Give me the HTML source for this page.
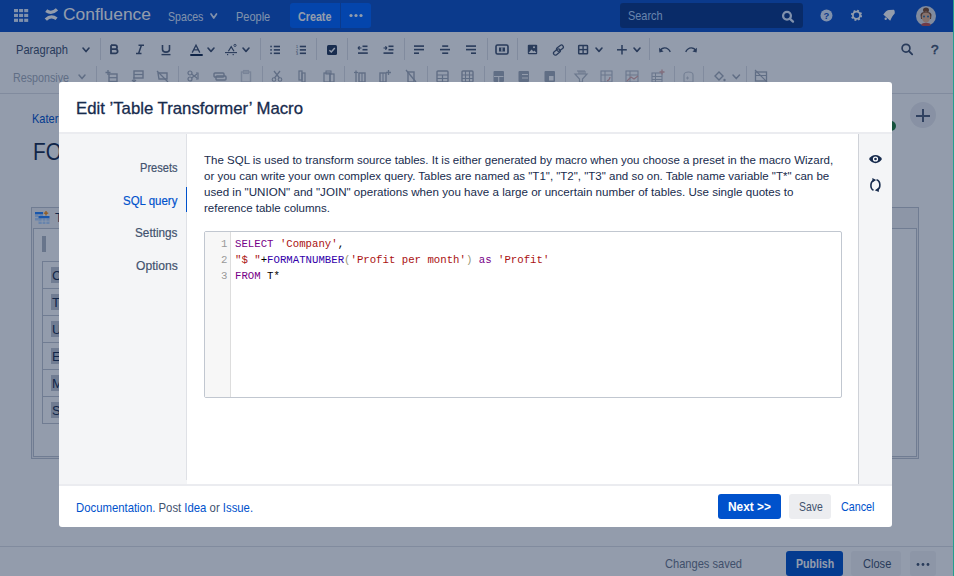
<!DOCTYPE html><html><head><meta charset="utf-8"><style>
*{box-sizing:border-box;margin:0;padding:0}
html,body{width:954px;height:576px;overflow:hidden;background:#fff;font-family:"Liberation Sans",sans-serif;color:#172b4d}
.a{position:absolute;overflow:visible}
.t{position:absolute;white-space:pre}
</style></head><body>
<div class="a" style="left:0;top:0;width:954px;height:32px;background:#0d50c6"></div>
<svg class="a" style="left:14px;top:9px;" width="15" height="13" viewBox="0 0 15 13"><rect x="0.00" y="0.00" width="4" height="3.2" fill="#deebff"/><rect x="0.00" y="4.85" width="4" height="3.2" fill="#deebff"/><rect x="0.00" y="9.70" width="4" height="3.2" fill="#deebff"/><rect x="5.10" y="0.00" width="4" height="3.2" fill="#deebff"/><rect x="5.10" y="4.85" width="4" height="3.2" fill="#deebff"/><rect x="5.10" y="9.70" width="4" height="3.2" fill="#deebff"/><rect x="10.20" y="0.00" width="4" height="3.2" fill="#deebff"/><rect x="10.20" y="4.85" width="4" height="3.2" fill="#deebff"/><rect x="10.20" y="9.70" width="4" height="3.2" fill="#deebff"/></svg>
<svg class="a" style="left:45px;top:8px;" width="14" height="13" viewBox="0 0 14 13"><path d="M1.2,2.6 Q6.5,6.6 12,1.4" fill="none" stroke="#fff" stroke-width="3.3"/><path d="M0.8,11.6 Q6,6.6 11.6,10.8" fill="none" stroke="#fff" stroke-width="3.3"/></svg>
<svg class="a" style="left:209px;top:11.5px" width="9.5" height="8.0"><polyline points="2,2 4.75,6.0 7.5,2" fill="none" stroke="#deebff" stroke-width="1.7" stroke-linecap="round" stroke-linejoin="round"/></svg>
<div class="a" style="left:290px;top:3px;width:50px;height:25px;background:#0065ff;border-radius:3px 0 0 3px"></div>
<div class="a" style="left:341px;top:3px;width:30px;height:25px;background:#0065ff;border-radius:0 3px 3px 0"></div>
<svg class="a" style="left:349px;top:13px;" width="14" height="5" viewBox="0 0 14 5"><circle cx="2" cy="2.5" r="1.6" fill="#fff"/><circle cx="7" cy="2.5" r="1.6" fill="#fff"/><circle cx="12" cy="2.5" r="1.6" fill="#fff"/></svg>
<div class="a" style="left:620px;top:3px;width:183px;height:25px;background:rgba(9,30,66,0.48);border-radius:3px"></div>
<svg class="a" style="left:781px;top:10px;" width="15" height="14" viewBox="0 0 15 14"><circle cx="6" cy="5.8" r="3.9" fill="none" stroke="#deebff" stroke-width="2.3"/><line x1="8.8" y1="8.6" x2="12" y2="11.6" stroke="#deebff" stroke-width="2.3" stroke-linecap="round"/></svg>
<svg class="a" style="left:820px;top:9px;" width="13" height="13" viewBox="0 0 13 13"><circle cx="6.5" cy="6.5" r="6" fill="#deebff"/><text x="6.5" y="10.3" font-family="Liberation Sans" font-weight="700" font-size="9.5" text-anchor="middle" fill="#0d50c6">?</text></svg>
<svg class="a" style="left:850px;top:9px;" width="13" height="13" viewBox="0 0 13 13"><circle cx="6.5" cy="6.3" r="4.7" fill="none" stroke="#fff" stroke-width="1.8" stroke-dasharray="1.85 1.85"/><circle cx="6.5" cy="6.3" r="3.6" fill="none" stroke="#fff" stroke-width="1.8"/></svg>
<svg class="a" style="left:883px;top:9px;" width="13" height="13" viewBox="0 0 13 13"><path d="M0.3,5.4 C2,3.5 3.5,1.5 5.8,1.1 L10.9,0.8 C11.8,1.5 11.9,3.5 11.7,4.6 L10,6.5 C8.8,8 8,10 7.2,11.7 Z" fill="#fff"/><circle cx="2.7" cy="9.8" r="1.2" fill="#fff"/></svg>
<svg class="a" style="left:916px;top:6px;" width="20" height="20" viewBox="0 0 20 20"><circle cx="10" cy="10" r="10" fill="#dfe1e6"/><ellipse cx="10" cy="4" rx="3" ry="2.6" fill="#7a4a2a"/><path d="M4.5,9 C4.5,4.5 15.5,4.5 15.5,9 L15,13 L5,13 Z" fill="#7a4a2a"/><ellipse cx="10" cy="11" rx="4.3" ry="5.5" fill="#e8b48e"/><path d="M5.5,9 C6,6 14,6 14.5,9 L14.5,8 C14,5.5 6,5.5 5.5,8Z" fill="#7a4a2a"/><circle cx="8" cy="10.5" r="1" fill="#2a6fa8"/><circle cx="12" cy="10.5" r="1" fill="#2a6fa8"/><path d="M5,19 C6,16 14,16 15,19 L13,20 L7,20Z" fill="#c0504d"/></svg>
<div class="a" style="left:0;top:93px;width:954px;height:1px;background:#dfe1e6"></div>
<svg class="a" style="left:80.5px;top:45.8px" width="10.0" height="7.600000000000001"><polyline points="2,2 5.0,5.600000000000001 8.0,2" fill="none" stroke="#42526e" stroke-width="1.6" stroke-linecap="round" stroke-linejoin="round"/></svg>
<div class="a" style="left:100px;top:38px;width:1px;height:22px;background:#dfe1e6"></div>
<svg class="a" style="left:109px;top:44px;" width="11" height="11" viewBox="0 0 11 11"><path d="M2,1.2 H6 C8.6,1.2 8.8,5.2 6.2,5.2 H2 M6.2,5.2 C9.4,5.2 9.4,9.4 6.4,9.4 H2 V1.2" fill="none" stroke="#42526e" stroke-width="1.8" stroke-linejoin="round"/></svg>
<svg class="a" style="left:135px;top:44px;" width="10" height="11" viewBox="0 0 10 11"><path d="M3.5,1.2 H9 M1,9.6 H6.5 M6.4,1.2 L3.6,9.6" fill="none" stroke="#42526e" stroke-width="1.5"/></svg>
<svg class="a" style="left:160px;top:44px;" width="12" height="12" viewBox="0 0 12 12"><path d="M2.5,1 V5.5 C2.5,9 9.5,9 9.5,5.5 V1" fill="none" stroke="#42526e" stroke-width="1.6"/><line x1="1.5" y1="10.6" x2="10.5" y2="10.6" stroke="#42526e" stroke-width="1.4"/></svg>
<svg class="a" style="left:189px;top:44px;" width="15" height="13" viewBox="0 0 15 13"><path d="M3.2,8.6 L7,1.2 L10.8,8.6 M4.8,5.8 H9.2" fill="none" stroke="#42526e" stroke-width="1.3"/><rect x="1.3" y="10" width="12.4" height="2" fill="#172b4d"/></svg>
<svg class="a" style="left:206px;top:45.6px" width="10" height="7.399999999999999"><polyline points="2,2 5.0,5.399999999999999 8,2" fill="none" stroke="#42526e" stroke-width="1.6" stroke-linecap="round" stroke-linejoin="round"/></svg>
<svg class="a" style="left:224px;top:43px;" width="14" height="14" viewBox="0 0 14 14"><path d="M4.4,8.2 L7.2,3.6 L10,8.2" fill="none" stroke="#42526e" stroke-width="1.2"/><line x1="1" y1="9.6" x2="13" y2="9.6" stroke="#42526e" stroke-width="1.1"/><rect x="3" y="11" width="1.2" height="1.2" fill="#42526e"/><rect x="8.6" y="11" width="1.2" height="1.2" fill="#42526e"/><circle cx="11" cy="2.4" r="1.1" fill="none" stroke="#42526e" stroke-width="0.9"/></svg>
<svg class="a" style="left:241px;top:45.6px" width="10" height="7.399999999999999"><polyline points="2,2 5.0,5.399999999999999 8,2" fill="none" stroke="#42526e" stroke-width="1.6" stroke-linecap="round" stroke-linejoin="round"/></svg>
<div class="a" style="left:260px;top:38px;width:1px;height:22px;background:#dfe1e6"></div>
<svg class="a" style="left:270px;top:45px;" width="11" height="10" viewBox="0 0 11 10"><rect x="0.3" y="0.7" width="1.5" height="1.6" fill="#42526e"/><rect x="3.8" y="0.7" width="6.2" height="1.6" fill="#42526e"/><rect x="0.3" y="4.1" width="1.5" height="1.6" fill="#42526e"/><rect x="3.8" y="4.1" width="6.2" height="1.6" fill="#42526e"/><rect x="0.3" y="7.5" width="1.5" height="1.6" fill="#42526e"/><rect x="3.8" y="7.5" width="6.2" height="1.6" fill="#42526e"/></svg>
<svg class="a" style="left:296px;top:45px;" width="11" height="10" viewBox="0 0 11 10"><rect x="3.8" y="0.7" width="6.2" height="1.6" fill="#42526e"/><rect x="3.8" y="4.1" width="6.2" height="1.6" fill="#42526e"/><rect x="3.8" y="7.5" width="6.2" height="1.6" fill="#42526e"/><text x="0" y="3" font-size="3.6" font-family="Liberation Sans" fill="#42526e">1</text><text x="0" y="6.6" font-size="3.6" font-family="Liberation Sans" fill="#42526e">2</text><text x="0" y="10" font-size="3.6" font-family="Liberation Sans" fill="#42526e">3</text></svg>
<div class="a" style="left:316px;top:38px;width:1px;height:22px;background:#dfe1e6"></div>
<svg class="a" style="left:327px;top:44.5px;" width="10" height="10" viewBox="0 0 10 10"><rect x="0" y="0" width="10" height="10" rx="1.5" fill="#253858"/><polyline points="2.4,5.2 4.3,7 7.8,3" fill="none" stroke="#fff" stroke-width="1.5"/></svg>
<div class="a" style="left:347px;top:38px;width:1px;height:22px;background:#dfe1e6"></div>
<svg class="a" style="left:357px;top:45px;" width="11" height="10" viewBox="0 0 11 10"><rect x="5.5" y="0.5" width="5" height="1.6" fill="#42526e"/><rect x="5.5" y="3.9" width="5" height="1.6" fill="#42526e"/><rect x="1" y="7.3" width="9.8" height="1.6" fill="#42526e"/><path d="M1,3 L4.5,3 M1,3 L2.6,1.4 M1,3 L2.6,4.6" stroke="#42526e" stroke-width="1.2" fill="none"/></svg>
<svg class="a" style="left:383px;top:45px;" width="11" height="10" viewBox="0 0 11 10"><rect x="5.5" y="0.5" width="5" height="1.6" fill="#42526e"/><rect x="5.5" y="3.9" width="5" height="1.6" fill="#42526e"/><rect x="0.5" y="7.3" width="9.8" height="1.6" fill="#42526e"/><path d="M0.5,3 L4,3 M4,3 L2.4,1.4 M4,3 L2.4,4.6" stroke="#42526e" stroke-width="1.2" fill="none"/></svg>
<div class="a" style="left:404px;top:38px;width:1px;height:22px;background:#dfe1e6"></div>
<svg class="a" style="left:414px;top:45px;" width="11" height="10" viewBox="0 0 11 10"><rect x="0" y="0.3" width="10" height="1.6" fill="#42526e"/><rect x="0" y="3.8" width="10" height="1.6" fill="#42526e"/><rect x="0" y="7.4" width="5" height="1.6" fill="#42526e"/></svg>
<svg class="a" style="left:440px;top:45px;" width="11" height="10" viewBox="0 0 11 10"><rect x="2.2" y="0.3" width="6" height="1.6" fill="#42526e"/><rect x="0" y="3.8" width="10" height="1.6" fill="#42526e"/><rect x="2.2" y="7.4" width="6" height="1.6" fill="#42526e"/></svg>
<svg class="a" style="left:466px;top:45px;" width="11" height="10" viewBox="0 0 11 10"><rect x="0" y="0.3" width="10" height="1.6" fill="#42526e"/><rect x="0" y="3.8" width="10" height="1.6" fill="#42526e"/><rect x="5" y="7.4" width="5" height="1.6" fill="#42526e"/></svg>
<div class="a" style="left:487px;top:38px;width:1px;height:22px;background:#dfe1e6"></div>
<svg class="a" style="left:495px;top:44px;" width="14" height="11" viewBox="0 0 14 11"><rect x="1" y="1" width="12" height="9" rx="1.5" fill="none" stroke="#42526e" stroke-width="1.6"/><rect x="4" y="3.5" width="6" height="4" fill="#42526e"/><rect x="6.3" y="3.5" width="1.2" height="4" fill="#fff"/></svg>
<div class="a" style="left:517px;top:38px;width:1px;height:22px;background:#dfe1e6"></div>
<svg class="a" style="left:527px;top:44px;" width="11" height="11" viewBox="0 0 11 11"><rect x="0.8" y="0.8" width="9.4" height="9.4" rx="1" fill="#42526e"/><path d="M1.5,9 L4.5,5.5 L6.5,7.5 L7.5,6.5 L9.5,9Z" fill="#fff"/><circle cx="7" cy="3.3" r="1" fill="#fff"/></svg>
<svg class="a" style="left:552px;top:44px;" width="13" height="12" viewBox="0 0 13 12"><g transform="rotate(-38 6.5 6)"><rect x="0.2" y="4.7" width="7.6" height="3.8" rx="1.9" fill="none" stroke="#42526e" stroke-width="1.25"/><rect x="5" y="3.5" width="7.6" height="3.8" rx="1.9" fill="none" stroke="#42526e" stroke-width="1.25"/></g></svg>
<svg class="a" style="left:577px;top:44px;" width="12" height="11" viewBox="0 0 12 11"><rect x="1.7" y="1.4" width="8.8" height="8.4" rx="0.6" fill="none" stroke="#42526e" stroke-width="1.5"/><line x1="6.1" y1="1" x2="6.1" y2="10" stroke="#42526e" stroke-width="1.4"/><line x1="1" y1="5.6" x2="11" y2="5.6" stroke="#42526e" stroke-width="1.4"/></svg>
<svg class="a" style="left:594px;top:45.6px" width="10" height="7.399999999999999"><polyline points="2,2 5.0,5.399999999999999 8,2" fill="none" stroke="#42526e" stroke-width="1.6" stroke-linecap="round" stroke-linejoin="round"/></svg>
<svg class="a" style="left:616px;top:43.5px;" width="12" height="12" viewBox="0 0 12 12"><line x1="6" y1="1" x2="6" y2="10.5" stroke="#42526e" stroke-width="1.5"/><line x1="1" y1="5.8" x2="10.8" y2="5.8" stroke="#42526e" stroke-width="1.5"/></svg>
<svg class="a" style="left:632px;top:45.6px" width="10" height="7.399999999999999"><polyline points="2,2 5.0,5.399999999999999 8,2" fill="none" stroke="#42526e" stroke-width="1.6" stroke-linecap="round" stroke-linejoin="round"/></svg>
<div class="a" style="left:649px;top:38px;width:1px;height:22px;background:#dfe1e6"></div>
<svg class="a" style="left:658px;top:44.5px;" width="14" height="9" viewBox="0 0 14 9"><path d="M2.2,5.8 C4,2 9.5,1.5 12.3,6.8" fill="none" stroke="#42526e" stroke-width="1.4"/><path d="M1,2.8 L1.4,7.6 L5.6,6.4Z" fill="#42526e"/></svg>
<svg class="a" style="left:684px;top:44.5px;" width="14" height="9" viewBox="0 0 14 9"><path d="M11.8,5.8 C10,2 4.5,1.5 1.7,6.8" fill="none" stroke="#42526e" stroke-width="1.4"/><path d="M13,2.8 L12.6,7.6 L8.4,6.4Z" fill="#42526e"/></svg>
<svg class="a" style="left:900px;top:43px;" width="15" height="14" viewBox="0 0 15 14"><circle cx="6" cy="5.2" r="3.9" fill="none" stroke="#42526e" stroke-width="1.7"/><line x1="8.8" y1="8" x2="12.2" y2="11.4" stroke="#42526e" stroke-width="1.8" stroke-linecap="round"/></svg>
<svg class="a" style="left:77px;top:72.8px" width="10" height="7.6000000000000085"><polyline points="2,2 5.0,5.6000000000000085 8,2" fill="none" stroke="#a5adba" stroke-width="1.5" stroke-linecap="round" stroke-linejoin="round"/></svg>
<div class="a" style="left:96px;top:66px;width:1px;height:22px;background:#dfe1e6"></div>
<div class="a" style="left:178px;top:66px;width:1px;height:22px;background:#dfe1e6"></div>
<div class="a" style="left:262px;top:66px;width:1px;height:22px;background:#dfe1e6"></div>
<div class="a" style="left:344px;top:66px;width:1px;height:22px;background:#dfe1e6"></div>
<div class="a" style="left:427px;top:66px;width:1px;height:22px;background:#dfe1e6"></div>
<div class="a" style="left:484px;top:66px;width:1px;height:22px;background:#dfe1e6"></div>
<div class="a" style="left:565px;top:66px;width:1px;height:22px;background:#dfe1e6"></div>
<div class="a" style="left:674px;top:66px;width:1px;height:22px;background:#dfe1e6"></div>
<div class="a" style="left:703px;top:66px;width:1px;height:22px;background:#dfe1e6"></div>
<div class="a" style="left:746px;top:66px;width:1px;height:22px;background:#dfe1e6"></div>
<svg class="a" style="left:105px;top:69px;opacity:0.60" width="15" height="14" viewBox="0 0 15 14"><rect x="4" y="5" width="8" height="7.5" fill="none" stroke="#6b778c" stroke-width="1.4"/><line x1="4" y1="8.7" x2="12" y2="8.7" stroke="#6b778c" stroke-width="1.2"/><path d="M3,1 V6 M0.5,3.5 H5.5" stroke="#6b778c" stroke-width="1.3"/></svg>
<svg class="a" style="left:131px;top:69px;opacity:0.60" width="15" height="14" viewBox="0 0 15 14"><rect x="3" y="2" width="9" height="7" fill="none" stroke="#6b778c" stroke-width="1.4"/><line x1="3" y1="5.5" x2="12" y2="5.5" stroke="#6b778c" stroke-width="1.2"/><path d="M3,8 V13 M1,11 L3,13 L5,11" fill="none" stroke="#6b778c" stroke-width="1.2"/></svg>
<svg class="a" style="left:156px;top:69px;opacity:0.60" width="16" height="14" viewBox="0 0 16 14"><path d="M2,4 H11 V10 H3 Z" fill="none" stroke="#6b778c" stroke-width="1.4"/><line x1="1" y1="2" x2="12" y2="13" stroke="#6b778c" stroke-width="1.3"/></svg>
<svg class="a" style="left:187px;top:69px;opacity:0.60" width="15" height="14" viewBox="0 0 15 14"><circle cx="3" cy="4" r="2" fill="none" stroke="#6b778c" stroke-width="1.2"/><circle cx="3" cy="10" r="2" fill="none" stroke="#6b778c" stroke-width="1.2"/><path d="M4.5,5 L10,9 M4.5,9 L10,5" fill="none" stroke="#6b778c" stroke-width="1.3"/><path d="M9,4 H11 V10 H9" fill="none" stroke="#6b778c" stroke-width="1.2"/></svg>
<svg class="a" style="left:212px;top:69px;opacity:0.60" width="16" height="14" viewBox="0 0 16 14"><rect x="2" y="4" width="10" height="4" rx="1" fill="none" stroke="#6b778c" stroke-width="1.4"/><rect x="4" y="7" width="10" height="4" rx="1" fill="none" stroke="#6b778c" stroke-width="1.4"/></svg>
<svg class="a" style="left:240px;top:69px;opacity:0.30" width="14" height="14" viewBox="0 0 14 14"><rect x="1.5" y="3" width="9" height="10" fill="none" stroke="#6b778c" stroke-width="1.4"/><rect x="3.5" y="1.5" width="5" height="3" fill="none" stroke="#6b778c" stroke-width="1.1"/></svg>
<svg class="a" style="left:271px;top:69px;opacity:0.60" width="14" height="14" viewBox="0 0 14 14"><circle cx="3" cy="10.5" r="1.8" fill="none" stroke="#6b778c" stroke-width="1.1"/><circle cx="9" cy="10.5" r="1.8" fill="none" stroke="#6b778c" stroke-width="1.1"/><path d="M3,2 L8.5,9 M9,2 L3.5,9" fill="none" stroke="#6b778c" stroke-width="1.3"/></svg>
<svg class="a" style="left:298px;top:69px;opacity:0.60" width="11" height="14" viewBox="0 0 11 14"><rect x="1" y="2" width="3" height="9" fill="none" stroke="#6b778c" stroke-width="1.2"/><rect x="4" y="4" width="3" height="9" fill="none" stroke="#6b778c" stroke-width="1.2"/></svg>
<svg class="a" style="left:323px;top:69px;opacity:0.60" width="14" height="14" viewBox="0 0 14 14"><rect x="1" y="4" width="6" height="9" fill="none" stroke="#6b778c" stroke-width="1.2"/><rect x="7" y="5" width="4" height="8" fill="none" stroke="#6b778c" stroke-width="1.2"/><rect x="3" y="2" width="5" height="3" fill="none" stroke="#6b778c" stroke-width="1"/></svg>
<svg class="a" style="left:354px;top:69px;opacity:0.60" width="14" height="14" viewBox="0 0 14 14"><rect x="5" y="4" width="6" height="9" fill="none" stroke="#6b778c" stroke-width="1.4"/><line x1="8" y1="4" x2="8" y2="13" stroke="#6b778c" stroke-width="1.1"/><path d="M2,1.5 V13" fill="none" stroke="#6b778c" stroke-width="1.3"/><path d="M0,3.5 H4" fill="none" stroke="#6b778c" stroke-width="1.2"/></svg>
<svg class="a" style="left:379px;top:69px;opacity:0.60" width="14" height="14" viewBox="0 0 14 14"><rect x="1" y="4" width="6" height="9" fill="none" stroke="#6b778c" stroke-width="1.4"/><line x1="4" y1="4" x2="4" y2="13" stroke="#6b778c" stroke-width="1.1"/><path d="M9.5,1 V6 M7,3.5 H12" fill="none" stroke="#6b778c" stroke-width="1.3"/></svg>
<svg class="a" style="left:405px;top:69px;opacity:0.60" width="14" height="14" viewBox="0 0 14 14"><rect x="3" y="3" width="6" height="10" fill="none" stroke="#6b778c" stroke-width="1.4"/><line x1="1" y1="1" x2="11" y2="13" stroke="#6b778c" stroke-width="1.3"/></svg>
<svg class="a" style="left:436px;top:69px;opacity:0.60" width="15" height="14" viewBox="0 0 15 14"><rect x="1" y="2" width="11" height="11" rx="1" fill="none" stroke="#6b778c" stroke-width="1.4"/><path d="M1,6 H12 M1,9.5 H12 M6.5,6 V13" stroke="#6b778c" stroke-width="1.2"/></svg>
<svg class="a" style="left:461px;top:69px;opacity:0.60" width="15" height="14" viewBox="0 0 15 14"><rect x="1" y="2" width="11" height="11" rx="1" fill="none" stroke="#6b778c" stroke-width="1.4"/><path d="M1,6 H12 M1,9.5 H12 M4.5,2 V13 M8.5,2 V13" stroke="#6b778c" stroke-width="1.1"/></svg>
<svg class="a" style="left:493px;top:69px;opacity:0.60" width="14" height="14" viewBox="0 0 14 14"><rect x="0.5" y="2" width="10.5" height="11" rx="1" fill="#6b778c"/><path d="M1,7.5 H10.5 M5.7,7.5 V13" stroke="#fff" stroke-width="1.1"/></svg>
<svg class="a" style="left:518px;top:69px;opacity:0.60" width="14" height="14" viewBox="0 0 14 14"><rect x="0.5" y="2" width="10.5" height="11" rx="1" fill="#6b778c"/><path d="M4,5.5 H10 M4,9 H10" stroke="#fff" stroke-width="1.1"/></svg>
<svg class="a" style="left:544px;top:69px;opacity:0.60" width="14" height="14" viewBox="0 0 14 14"><rect x="0.5" y="2" width="10.5" height="11" rx="1" fill="#6b778c"/><rect x="5" y="7" width="4.5" height="4.5" fill="#fff"/></svg>
<svg class="a" style="left:574px;top:69px;opacity:0.48" width="17" height="14" viewBox="0 0 17 14"><path d="M1,5 H13 L8.5,10 V13 H5.5 V10 Z" fill="none" stroke="#6b778c" stroke-width="1.2"/><path d="M3,2 H11 V5 M5,2 V5 M7,2 V5 M9,2 V5" fill="none" stroke="#6b778c" stroke-width="1"/></svg>
<svg class="a" style="left:600px;top:69px;opacity:0.48" width="16" height="14" viewBox="0 0 16 14"><rect x="1" y="2" width="11" height="11" fill="none" stroke="#6b778c" stroke-width="1.1"/><path d="M1,6 H12 M5,2 V13" stroke="#6b778c" stroke-width="1"/><path d="M7,12 C9,11 10,10 10,8" stroke="#c0504d" stroke-width="1.2" fill="none"/></svg>
<svg class="a" style="left:625px;top:69px;opacity:0.48" width="17" height="14" viewBox="0 0 17 14"><rect x="1" y="2" width="12" height="11" fill="none" stroke="#6b778c" stroke-width="1.1"/><path d="M1,6 H13 M5,2 V13" stroke="#6b778c" stroke-width="1"/><path d="M2,12 L6,8 L9,10 L13,7" stroke="#c0504d" stroke-width="1.2" fill="none"/></svg>
<svg class="a" style="left:651px;top:69px;opacity:0.48" width="17" height="14" viewBox="0 0 17 14"><rect x="1" y="4" width="10" height="9" fill="none" stroke="#6b778c" stroke-width="1.1"/><path d="M1,7.5 H11 M1,10.5 H11 M4.5,4 V13" stroke="#6b778c" stroke-width="1"/><path d="M11,0.5 V5.5 M8.5,3 H13.5" stroke="#c0504d" stroke-width="1.3"/></svg>
<svg class="a" style="left:682px;top:69px;opacity:0.36" width="16" height="14" viewBox="0 0 16 14"><path d="M2,6 C2,2 11,2 11,6 V13 H2 Z" fill="none" stroke="#6b778c" stroke-width="1.2"/><path d="M4,9 H7 M5.5,7.5 V10.5" stroke="#6b778c" stroke-width="1"/></svg>
<svg class="a" style="left:713px;top:69px;opacity:0.60" width="16" height="14" viewBox="0 0 16 14"><path d="M2,7 L6,3 L10,7 L6,11 Z" fill="none" stroke="#6b778c" stroke-width="1.4"/><circle cx="11.5" cy="11" r="1.2" fill="#6b778c"/></svg>
<svg class="a" style="left:730.5px;top:72.8px" width="10.5" height="7.6000000000000085"><polyline points="2,2 5.25,5.6000000000000085 8.5,2" fill="none" stroke="#a5adba" stroke-width="1.5" stroke-linecap="round" stroke-linejoin="round"/></svg>
<svg class="a" style="left:754px;top:69px;opacity:0.60" width="16" height="14" viewBox="0 0 16 14"><rect x="1.5" y="3" width="11" height="9" fill="none" stroke="#6b778c" stroke-width="1.3"/><path d="M1,1 L13,13 M1.5,6.5 H12.5" stroke="#6b778c" stroke-width="1.2"/></svg>
<div class="a" style="left:910px;top:102px;width:26px;height:26px;border-radius:50%;background:#ebecf0"></div>
<svg class="a" style="left:915px;top:108px;" width="16" height="16" viewBox="0 0 16 16"><path d="M8,1 V14 M1,8 H15" stroke="#505f79" stroke-width="2"/></svg>
<div class="a" style="left:886px;top:121px;width:10px;height:10px;border-radius:50%;background:#1f7a3a"></div>
<div class="a" style="left:31px;top:207px;width:888px;height:252px;border:1px solid #c1c7d0;background:#f4f5f7"></div>
<div class="a" style="left:33px;top:228px;width:884px;height:229px;border:1px solid #c1c7d0;background:#fff"></div>
<svg class="a" style="left:35px;top:211px;" width="16" height="14" viewBox="0 0 16 14"><rect x="0" y="1" width="8" height="2.5" fill="#2684ff"/><rect x="0" y="3.5" width="8" height="6" fill="#b3d4ff"/><path d="M0,6.5 H8 M4,3.5 V9.5" stroke="#fff" stroke-width="0.7"/><rect x="3.5" y="5" width="11" height="2.5" fill="#2684ff"/><rect x="3.5" y="7.5" width="11" height="5.5" fill="#b3d4ff"/><path d="M3.5,10.2 H14.5 M7.2,7.5 V13 M10.9,7.5 V13" stroke="#fff" stroke-width="0.7"/><path d="M11,0 V4.5 M8.8,2.2 H13.2" stroke="#ff8b00" stroke-width="1.3"/></svg>
<div class="a" style="left:42px;top:236px;width:4px;height:16px;background:#b3bac5"></div>
<div class="a" style="left:42px;top:261px;width:840px;height:28px;border:1px solid #c1c7d0"></div>
<div class="a" style="left:42px;top:288px;width:840px;height:28px;border:1px solid #c1c7d0"></div>
<div class="a" style="left:42px;top:315px;width:840px;height:28px;border:1px solid #c1c7d0"></div>
<div class="a" style="left:42px;top:342px;width:840px;height:28px;border:1px solid #c1c7d0"></div>
<div class="a" style="left:42px;top:369px;width:840px;height:28px;border:1px solid #c1c7d0"></div>
<div class="a" style="left:42px;top:396px;width:840px;height:28px;border:1px solid #c1c7d0"></div>
<div class="a" style="left:51px;top:267px;width:12px;height:16px;background:#c1c7d0"></div>
<div class="a" style="left:51px;top:294px;width:12px;height:16px;background:#c1c7d0"></div>
<div class="a" style="left:51px;top:321px;width:12px;height:16px;background:#c1c7d0"></div>
<div class="a" style="left:51px;top:348px;width:12px;height:16px;background:#c1c7d0"></div>
<div class="a" style="left:51px;top:375px;width:12px;height:16px;background:#c1c7d0"></div>
<div class="a" style="left:51px;top:402px;width:12px;height:16px;background:#c1c7d0"></div>
<div class="a" style="left:0;top:546px;width:954px;height:1px;background:#dfe1e6"></div>
<div class="a" style="left:786px;top:551px;width:57px;height:25px;background:#0052cc;border-radius:3px"></div>
<div class="a" style="left:851px;top:551px;width:50px;height:25px;background:#f4f5f7;border-radius:3px"></div>
<div class="a" style="left:910px;top:551px;width:26px;height:25px;background:#f4f5f7;border-radius:3px"></div>
<svg class="a" style="left:916px;top:562px;" width="14" height="5" viewBox="0 0 14 5"><circle cx="2" cy="2.5" r="1.4" fill="#42526e"/><circle cx="7" cy="2.5" r="1.4" fill="#42526e"/><circle cx="12" cy="2.5" r="1.4" fill="#42526e"/></svg>
<div class="t" style="left:63.00px;top:6.21px;font-size:17px;line-height:17px;color:#fff;font-weight:400;font-family:'Liberation Sans';transform:scaleX(1.0231);transform-origin:0 0;">Confluence</div>
<div class="t" style="left:168.00px;top:9.80px;font-size:13px;line-height:13px;color:#deebff;font-weight:400;font-family:'Liberation Sans';transform:scaleX(0.8161);transform-origin:0 0;">Spaces</div>
<div class="t" style="left:235.60px;top:9.80px;font-size:13px;line-height:13px;color:#deebff;font-weight:400;font-family:'Liberation Sans';transform:scaleX(0.8448);transform-origin:0 0;">People</div>
<div class="t" style="left:298.40px;top:9.80px;font-size:13px;line-height:13px;color:#fff;font-weight:700;font-family:'Liberation Sans';transform:scaleX(0.8253);transform-origin:0 0;">Create</div>
<div class="t" style="left:627.80px;top:9.30px;font-size:13px;line-height:13px;color:#b3d4ff;font-weight:400;font-family:'Liberation Sans';transform:scaleX(0.8397);transform-origin:0 0;">Search</div>
<div class="t" style="left:930.50px;top:43.00px;font-size:13px;line-height:13px;color:#42526e;font-weight:400;font-family:'Liberation Sans';transform:scaleX(1.0367);transform-origin:0 0;-webkit-text-stroke:0.5px #42526e;">?</div>
<div class="t" style="left:16.00px;top:42.80px;font-size:13px;line-height:13px;color:#42526e;font-weight:400;font-family:'Liberation Sans';transform:scaleX(0.8564);transform-origin:0 0;">Paragraph</div>
<div class="t" style="left:13.00px;top:70.80px;font-size:13px;line-height:13px;color:#a5adba;font-weight:400;font-family:'Liberation Sans';transform:scaleX(0.8243);transform-origin:0 0;">Responsive</div>
<div class="t" style="left:32.00px;top:112.00px;font-size:13px;line-height:13px;color:#0052cc;font-weight:400;font-family:'Liberation Sans';transform:scaleX(0.8467);transform-origin:0 0;">Katerina</div>
<div class="t" style="left:32.50px;top:140.83px;font-size:23px;line-height:23px;color:#172b4d;font-weight:400;font-family:'Liberation Sans';transform:scaleX(0.9014);transform-origin:0 0;">FORMAT</div>
<div class="t" style="left:55.00px;top:211.00px;font-size:13px;line-height:13px;color:#172b4d;font-weight:400;font-family:'Liberation Sans';">T</div>
<div class="t" style="left:52.00px;top:269.00px;font-size:13px;line-height:13px;color:#172b4d;font-weight:400;font-family:'Liberation Sans';">C</div>
<div class="t" style="left:52.00px;top:296.00px;font-size:13px;line-height:13px;color:#172b4d;font-weight:400;font-family:'Liberation Sans';">T</div>
<div class="t" style="left:52.00px;top:323.00px;font-size:13px;line-height:13px;color:#172b4d;font-weight:400;font-family:'Liberation Sans';">U</div>
<div class="t" style="left:52.00px;top:350.00px;font-size:13px;line-height:13px;color:#172b4d;font-weight:400;font-family:'Liberation Sans';">E</div>
<div class="t" style="left:52.00px;top:377.00px;font-size:13px;line-height:13px;color:#172b4d;font-weight:400;font-family:'Liberation Sans';">M</div>
<div class="t" style="left:52.00px;top:404.00px;font-size:13px;line-height:13px;color:#172b4d;font-weight:400;font-family:'Liberation Sans';">S</div>
<div class="t" style="left:665.30px;top:556.70px;font-size:13px;line-height:13px;color:#6b778c;font-weight:400;font-family:'Liberation Sans';transform:scaleX(0.8523);transform-origin:0 0;">Changes saved</div>
<div class="t" style="left:796.00px;top:556.70px;font-size:13px;line-height:13px;color:#fff;font-weight:700;font-family:'Liberation Sans';transform:scaleX(0.8136);transform-origin:0 0;">Publish</div>
<div class="t" style="left:862.90px;top:556.70px;font-size:13px;line-height:13px;color:#42526e;font-weight:400;font-family:'Liberation Sans';transform:scaleX(0.8511);transform-origin:0 0;">Close</div>
<div class="a" style="left:0;top:0;width:954px;height:576px;background:rgba(9,30,66,0.44)"></div>
<div class="a" style="left:953px;top:0;width:1px;height:576px;background:#23a08e"></div>
<div class="a" style="left:59px;top:82px;width:833px;height:445px;background:#fff;border-radius:3px"></div>
<div class="a" style="left:59px;top:132px;width:833px;height:2px;background:#ebecf0"></div>
<div class="a" style="left:59px;top:134px;width:128px;height:350px;background:#f4f5f7"></div>
<div class="a" style="left:186px;top:134px;width:1px;height:346px;background:#dfe1e6"></div>
<div class="a" style="left:186px;top:187px;width:1px;height:25px;background:#0052cc"></div>
<div class="a" style="left:858px;top:134px;width:34px;height:350px;background:#f4f5f7;border-left:1px solid #cfd2d8"></div>
<div class="a" style="left:59px;top:484px;width:833px;height:2px;background:#ebecf0"></div>
<svg class="a" style="left:868px;top:153px;" width="15" height="12" viewBox="0 0 15 12"><path d="M1,6 C4,0.5 11,0.5 14,6 C11,11.5 4,11.5 1,6Z" fill="#172b4d"/><circle cx="7.5" cy="6" r="2.6" fill="#fff"/><circle cx="7.5" cy="6" r="1.3" fill="#172b4d"/></svg>
<svg class="a" style="left:869px;top:178px;" width="13" height="14" viewBox="0 0 13 14"><path d="M5.5,2 C1,3.2 0.8,10.5 4.5,12.3" fill="none" stroke="#172b4d" stroke-width="1.6"/><path d="M3.3,0 L7.2,2.1 L3.6,4.3Z" fill="#172b4d"/><path d="M7.5,1.8 C11.8,3 12,10.5 8,12" fill="none" stroke="#172b4d" stroke-width="1.6"/><path d="M10,9.6 L9.8,14 L5.8,12.3Z" fill="#172b4d"/></svg>
<div class="a" style="left:204px;top:231px;width:638px;height:167px;border:1px solid #c1c7d0;border-radius:2px;background:#fff"></div>
<div class="a" style="left:205px;top:232px;width:26px;height:165px;background:#f7f7f7;border-right:1px solid #ddd"></div>
<div class="t" style="left:221px;top:238.59px;font-family:'Liberation Mono';font-size:10.69px;line-height:10.69px;color:#999">1</div>
<div class="t" style="left:235px;top:238.59px;font-family:'Liberation Mono';font-size:10.69px;line-height:10.69px;"><span style="color:#770088">SELECT</span><span style="color:#000"> </span><span style="color:#aa1111">&#x27;Company&#x27;</span><span style="color:#000">,</span></div>
<div class="t" style="left:221px;top:254.59px;font-family:'Liberation Mono';font-size:10.69px;line-height:10.69px;color:#999">2</div>
<div class="t" style="left:235px;top:254.59px;font-family:'Liberation Mono';font-size:10.69px;line-height:10.69px;"><span style="color:#aa1111">&quot;$ &quot;</span><span style="color:#000">+</span><span style="color:#3300aa">FORMATNUMBER</span><span style="color:#999977">(</span><span style="color:#aa1111">&#x27;Profit per month&#x27;</span><span style="color:#999977">)</span><span style="color:#000"> </span><span style="color:#770088">as</span><span style="color:#000"> </span><span style="color:#aa1111">&#x27;Profit&#x27;</span></div>
<div class="t" style="left:221px;top:270.59px;font-family:'Liberation Mono';font-size:10.69px;line-height:10.69px;color:#999">3</div>
<div class="t" style="left:235px;top:270.59px;font-family:'Liberation Mono';font-size:10.69px;line-height:10.69px;"><span style="color:#770088">FROM</span><span style="color:#000000"> T*</span></div>
<div class="a" style="left:718px;top:494px;width:63px;height:25px;background:#0052cc;border-radius:3px"></div>
<div class="a" style="left:789px;top:494px;width:42px;height:25px;background:rgba(9,30,66,0.08);border-radius:3px"></div>
<div class="t" style="left:76.00px;top:100.01px;font-size:17px;line-height:17px;color:#172b4d;font-weight:400;font-family:'Liberation Sans';transform:scaleX(0.9847);transform-origin:0 0;-webkit-text-stroke:0.3px #172b4d;">Edit ’Table Transformer’ Macro</div>
<div class="t" style="left:139.80px;top:160.80px;font-size:13px;line-height:13px;color:#42526e;font-weight:400;font-family:'Liberation Sans';transform:scaleX(0.8508);transform-origin:0 0;-webkit-text-stroke:0.2px #42526e;">Presets</div>
<div class="t" style="left:122.90px;top:193.50px;font-size:13px;line-height:13px;color:#0052cc;font-weight:400;font-family:'Liberation Sans';transform:scaleX(0.8821);transform-origin:0 0;-webkit-text-stroke:0.2px #0052cc;">SQL query</div>
<div class="t" style="left:134.80px;top:225.50px;font-size:13px;line-height:13px;color:#42526e;font-weight:400;font-family:'Liberation Sans';transform:scaleX(0.9046);transform-origin:0 0;-webkit-text-stroke:0.2px #42526e;">Settings</div>
<div class="t" style="left:135.60px;top:258.50px;font-size:13px;line-height:13px;color:#42526e;font-weight:400;font-family:'Liberation Sans';transform:scaleX(0.9305);transform-origin:0 0;-webkit-text-stroke:0.2px #42526e;">Options</div>
<div class="t" style="left:204.00px;top:154.87px;font-size:11.5px;line-height:11.5px;color:#172b4d;font-weight:400;font-family:'Liberation Sans';">The SQL is used to transform source tables. It is either generated by macro when you choose a preset in the macro Wizard,</div>
<div class="t" style="left:204.00px;top:170.87px;font-size:11.5px;line-height:11.5px;color:#172b4d;font-weight:400;font-family:'Liberation Sans';">or you can write your own complex query. Tables are named as &quot;T1&quot;, &quot;T2&quot;, &quot;T3&quot; and so on. Table name variable &quot;T*&quot; can be</div>
<div class="t" style="left:204.00px;top:186.87px;font-size:11.5px;line-height:11.5px;color:#172b4d;font-weight:400;font-family:'Liberation Sans';transform:scaleX(1.0083);transform-origin:0 0;">used in &quot;UNION&quot; and &quot;JOIN&quot; operations when you have a large or uncertain number of tables. Use single quotes to</div>
<div class="t" style="left:204.00px;top:202.87px;font-size:11.5px;line-height:11.5px;color:#172b4d;font-weight:400;font-family:'Liberation Sans';">reference table columns.</div>
<div class="t" style="left:727.90px;top:500.00px;font-size:13px;line-height:13px;color:#fff;font-weight:700;font-family:'Liberation Sans';transform:scaleX(0.9152);transform-origin:0 0;">Next &gt;&gt;</div>
<div class="t" style="left:798.50px;top:500.00px;font-size:13px;line-height:13px;color:#42526e;font-weight:400;font-family:'Liberation Sans';transform:scaleX(0.7996);transform-origin:0 0;">Save</div>
<div class="t" style="left:840.90px;top:500.00px;font-size:13px;line-height:13px;color:#0052cc;font-weight:400;font-family:'Liberation Sans';transform:scaleX(0.8278);transform-origin:0 0;">Cancel</div>
<div class="t" style="left:76px;top:501.00px;font-size:13px;line-height:13px;color:#42526e;transform:scaleX(0.8717);transform-origin:0 0"><span style="color:#0052cc">Documentation.</span> Post <span style="color:#0052cc">Idea</span> or <span style="color:#0052cc">Issue.</span></div>
</body></html>
